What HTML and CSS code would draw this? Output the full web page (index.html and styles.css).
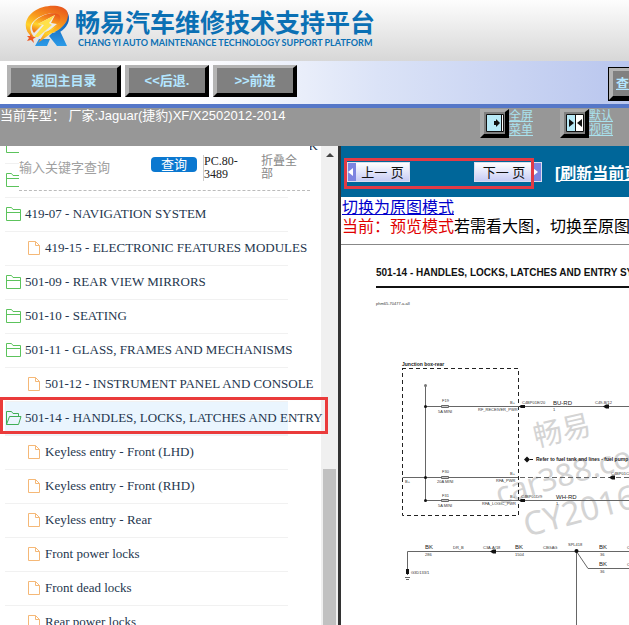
FILE: index.html
```html
<!DOCTYPE html>
<html lang="zh-CN">
<head>
<meta charset="utf-8">
<title>畅易汽车维修技术支持平台</title>
<link rel="stylesheet" href="styles.css">
</head>
<body>
<header class="brand">
  <svg class="brand-logo" viewBox="0 0 48 42" aria-hidden="true">
    <defs>
      <linearGradient id="flame" x1="0.8" y1="0" x2="0.3" y2="1">
        <stop offset="0" stop-color="#e8561c"/><stop offset="0.4" stop-color="#f7941d"/><stop offset="0.7" stop-color="#ffd42b"/><stop offset="1" stop-color="#f07a1c"/>
      </linearGradient>
      <linearGradient id="leg" x1="0" y1="0" x2="0" y2="1">
        <stop offset="0" stop-color="#0b4fa8"/><stop offset="1" stop-color="#2b9be8"/>
      </linearGradient>
    </defs>
    <path fill="url(#leg)" d="M15 34L26 34L23 41L11 41ZM28 28L36 26L43 41L33 41L25 31ZM43 7C48 14 43 24 34 28L30 27C40 22 44 16 43 7Z"/>
    <path fill="url(#flame)" d="M8 32C-1 25 0 14 9 7C20-1 38-1 43 6C47 15 38 25 26 29L14 38L21 27C31 25 37 18 35 12C32 6 19 8 11 15C5 20 5 26 10 32Z"/>
    <path fill="url(#flame)" d="M36 11C33 6 20 8 12 15C7 19 7 24 10 28L14 24L18 20L14 19L31 10L27 18L33 19L22 28C32 24 38 17 36 11Z"/>
    <path fill="#ffe14a" d="M31 10L14 19L20 20L10 32L14 32L28 20L25 18Z"/>
    <path fill="#ee5a24" d="M7 29L8 32L12 32L9 34L10 38L7 35L3 36L5 33L3 31L6 31Z"/>
  </svg>
  <div class="brand-text">
    <h1>畅易汽车维修技术支持平台</h1>
    <p>CHANG YI AUTO MAINTENANCE TECHNOLOGY SUPPORT PLATFORM</p>
  </div>
</header>

<nav class="toolbar">
  <button class="bevel wide">返回主目录</button>
  <button class="bevel">&lt;&lt;后退.</button>
  <button class="bevel">&gt;&gt;前进</button>
  <button class="bevel search-all">查询</button>
</nav>

<div class="status">
  <p class="vehicle">当前车型： 厂家:Jaguar(捷豹)XF/X2502012-2014</p>
  <a class="view" href="#full">
    <span class="view-icon"><svg viewBox="0 0 18 18" aria-hidden="true"><path fill="#b8eaf8" stroke="#111" d="M.5.5H17.5V17.5H.5Z"/><path fill="#fff" d="M15 1H17V17H15Z"/><path fill="#111" d="M15 1H16V17H15ZM8 7H10V5L14 9L10 13V11H8Z"/></svg></span>
    <span class="view-label">全屏<br>菜单</span>
  </a>
  <a class="view" href="#default">
    <span class="view-icon"><svg viewBox="0 0 18 18" aria-hidden="true"><path fill="#fff" stroke="#111" d="M.5.5H17.5V17.5H.5Z"/><path fill="#b8eaf8" d="M1 1H9V17H1Z"/><path fill="#111" d="M9 1H10V17H9ZM3 5L8 9L3 13ZM16 5L11 9L16 13Z"/></svg></span>
    <span class="view-label">默认<br>视图</span>
  </a>
</div>

<svg class="symbols" aria-hidden="true">
  <symbol id="folder" viewBox="0 0 17 16"><path fill="none" stroke="#5cc35c" d="M1.5 14.5V1.5H6.5L8 3.5H15.5V14.5ZM1.5 6.5H15.5"/></symbol>
  <symbol id="folder-open" viewBox="0 0 17 16"><path fill="none" stroke="#3fae55" d="M1.5 14.5V1.5H6.5L8 3.5H13.5V6.5M1.5 14.5L4.5 6.5H16L13.5 14.5Z"/></symbol>
  <symbol id="file" viewBox="0 0 14 16"><path fill="none" stroke="#f5b877" d="M1.5 1.5H8.5L12.5 5.5V14.5H1.5ZM8.5 1.5V5.5H12.5"/></symbol>
</svg>

<main class="panes">
  <section class="tree-pane">
    <form class="finder">
      <input type="text" placeholder="输入关键字查询" aria-label="输入关键字查询">
      <button type="button">查询</button>
      <span class="code">PC.80-<br>3489</span>
      <a class="fold" href="#fold">折叠全<br>部</a>
    </form>
    <ul class="tree">
      <li><svg class="folder"><use href="#folder"/></svg><span class="tail">K</span></li>
      <li><svg class="folder"><use href="#folder"/></svg></li>
      <li><svg class="folder"><use href="#folder"/></svg><span>419-07 - NAVIGATION SYSTEM</span></li>
      <li class="child"><svg class="file"><use href="#file"/></svg><span>419-15 - ELECTRONIC FEATURES MODULES</span></li>
      <li><svg class="folder"><use href="#folder"/></svg><span>501-09 - REAR VIEW MIRRORS</span></li>
      <li><svg class="folder"><use href="#folder"/></svg><span>501-10 - SEATING</span></li>
      <li><svg class="folder"><use href="#folder"/></svg><span>501-11 - GLASS, FRAMES AND MECHANISMS</span></li>
      <li class="child"><svg class="file"><use href="#file"/></svg><span>501-12 - INSTRUMENT PANEL AND CONSOLE</span></li>
      <li class="selected"><svg class="folder"><use href="#folder-open"/></svg><span>501-14 - HANDLES, LOCKS, LATCHES AND ENTRY</span></li>
      <li class="child"><svg class="file"><use href="#file"/></svg><span>Keyless entry - Front (LHD)</span></li>
      <li class="child"><svg class="file"><use href="#file"/></svg><span>Keyless entry - Front (RHD)</span></li>
      <li class="child"><svg class="file"><use href="#file"/></svg><span>Keyless entry - Rear</span></li>
      <li class="child"><svg class="file"><use href="#file"/></svg><span>Front power locks</span></li>
      <li class="child"><svg class="file"><use href="#file"/></svg><span>Front dead locks</span></li>
      <li class="child"><svg class="file"><use href="#file"/></svg><span>Rear power locks</span></li>
    </ul>
  </section>
  <div class="scroll"><span class="scroll-up"></span><span class="scroll-thumb"></span></div>

  <section class="doc-pane">
    <div class="pager">
      <button class="page prev"><i></i><span>上一 页</span></button>
      <button class="page next"><span>下一 页</span><i></i></button>
      <a class="refresh" href="#refresh">[刷新当前页]</a>
    </div>
    <div class="mode">
      <a href="#original">切换为原图模式</a>
      <p><b>当前：预览模式</b>若需看大图，切换至原图模式</p>
    </div>
    <svg class="diagram" viewBox="342 245 600 500">
      <g class="watermark">
        <text transform="translate(536 447) rotate(-13)" font-size="29">畅易</text>
        <text transform="translate(499 505) rotate(-16)" font-size="31">car388.com</text>
        <text transform="translate(527 537) rotate(-15)" font-size="33">CY2016</text>
      </g>
      <text class="heading" x="376" y="276">501-14 - HANDLES, LOCKS, LATCHES AND ENTRY SYSTEMS</text>
      <path class="rule" d="M376 287H900"/>
      <text class="tiny" x="376" y="305">phm65-70477-a-all</text>
      <text class="strong" x="402" y="366">Junction box-rear</text>
      <path class="box" d="M402 368.5H518.5V515.5H402.5V368.5"/>
      <g class="wire">
        <path d="M425.5 386V500.5M425.5 406.5H900M402.5 477.5H518M425.5 500.5H900"/>
        <path stroke-dasharray="5 3" d="M520 477.5H900"/>
        <path d="M407.5 575V551.5H900M576.5 551V745M576.5 551.5L588 568.5H900M405 577.5H410M406 579.5H409"/>
        <path fill="#ccc" d="M441.5 405.5H448.5V407.5H441.5ZM441.5 476.5H448.5V478.5H441.5ZM441.5 499.5H448.5V501.5H441.5Z"/>
      </g>
      <g class="node">
        <circle cx="425.5" cy="385.5" r="1.5" fill="#777"/>
        <circle cx="425.5" cy="406.5" r="1.5"/><circle cx="425.5" cy="477.5" r="1.5"/><circle cx="425.5" cy="500.5" r="1.5"/>
        <circle cx="576.5" cy="551" r="2"/>
        <path d="M519 406.5L521 405H525V408H521ZM519 500.5L521 499H525V502H521ZM603 406.5L606 404.5H609V408.5H606ZM609 477.5L612 475.5H615V479.5H612ZM490 551.5L493 549.5H496V553.5H493ZM406 569H409V574H406ZM524 459.5L527 456.5L530 459.5L527 462.5ZM530 459H533V460H530Z"/>
      </g>
      <g class="tiny">
        <text x="442" y="402">F19</text><text x="438" y="413">5A MINI</text>
        <text x="510" y="404">B+</text><text x="478" y="411">RF_RECEIVER_PWR</text>
        <text x="522" y="404">C4BP01E/20</text><text x="553" y="411">1</text><text x="595" y="404">C49-B/12</text>
        <text x="442" y="473">F30</text><text x="437" y="483">20A MINI</text>
        <text x="405" y="483">B+</text><text x="510" y="475">B+</text><text x="496" y="482">RFA_PWR</text><text x="611" y="475">C4BP01C/4</text>
        <text x="442" y="497">F31</text><text x="438" y="507">5A MINI</text>
        <text x="510" y="498">B+</text><text x="482" y="505">RFA_LOGIC_PWR</text><text x="521" y="498">C4BP01D/9</text><text x="556" y="505">1</text>
        <text x="425" y="556">286</text><text x="453" y="549">DR_B</text><text x="483" y="549">C3A-A/18</text>
        <text x="515" y="556">1504</text><text x="543" y="549">CBGAG</text><text x="568" y="546">SPL418</text>
        <text x="600" y="556">36</text><text x="600" y="573">36</text><text x="411" y="574">G3D133/1</text>
        <text x="627" y="549">C</text><text x="627" y="566">C</text>
      </g>
      <g class="label">
        <text x="553" y="405">BU-RD</text><text x="556" y="499">WH-RD</text>
        <text x="425" y="549">BK</text><text x="515" y="549">BK</text><text x="599" y="549">BK</text><text x="599" y="566">BK</text>
      </g>
      <text class="strong" x="536" y="461">Refer to fuel tank and lines - fuel pump</text>
    </svg>
  </section>
</main>
</body>
</html>
```
FILE: styles.css
```css
*, *::before, *::after { box-sizing: border-box; }
body {
  margin: 0;
  height: 100vh;
  overflow: hidden;
  display: flex;
  flex-direction: column;
  font-family: "Liberation Sans", "Noto Sans CJK SC", sans-serif;
  background: #fff;
}
h1, p, ul { margin: 0; padding: 0; }
button { font: inherit; padding: 0; white-space: nowrap; }
.symbols { display: none; }

.brand {
  flex: none;
  height: 61px;
  padding: 5px 0 0 24px;
  display: flex;
  gap: 3px;
  background: linear-gradient(#fdfdfd, #d7d7d7);
}
.brand-logo { width: 48px; height: 42px; }
.brand-text { color: #0b70b4; white-space: nowrap; }
.brand-text h1 { font: bold 25px/33px "Noto Sans CJK SC", sans-serif; }
.brand-text p { padding-left: 3px; font: bold 9px/10px Lato, "Liberation Sans", sans-serif; }

.toolbar {
  flex: none;
  height: 47px;
  padding: 4px 0 0 7px;
  display: flex;
  align-items: flex-start;
  gap: 4px;
  overflow: hidden;
  background: linear-gradient(90deg, #fff 30%, #dbe3f7 60%, #b9c6ee);
  border-bottom: 4px solid #5577c8;
}
.bevel {
  flex: none;
  width: 84px;
  height: 32px;
  background: #808080;
  border: 4px solid;
  border-color: #b4b4b4 #000 #000 #b4b4b4;
  border-top-width: 3px;
  color: #b4e6ff;
  font-size: 13px;
  font-weight: bold;
  line-height: 20px;
}
.wide { width: 114px; }
.search-all {
  margin: 3px -64px 0 auto;
  outline: 1px solid #000;
  text-align: left;
  padding-left: 3px;
  text-decoration: underline;
}

.status {
  flex: none;
  height: 38px;
  padding: 1px 16px 0 0;
  display: flex;
  align-items: flex-start;
  gap: 27px;
  background: #979797;
}
.vehicle { margin-right: auto; color: #fff; font-size: 13px; line-height: 14px; white-space: nowrap; }
.view { display: flex; color: #a9e2ee; font-size: 12px; line-height: 14px; }
.view-icon {
  width: 29px;
  height: 29px;
  padding: 2px;
  background: #808080;
  border: 4px solid;
  border-color: #aaa #000 #000 #aaa;
  border-top-width: 3px;
}
.view-icon svg { display: block; width: 18px; height: 18px; }

.panes { flex: 1; min-height: 0; display: flex; }
.tree-pane {
  position: relative;
  z-index: 1;
  flex: none;
  width: 321px;
  overflow-x: visible;
  overflow-y: clip;
}
.finder {
  position: absolute;
  top: 0;
  left: 19px;
  width: 291px;
  height: 45px;
  padding-top: 9px;
  display: flex;
  align-items: flex-start;
  background: #fff;
  border-bottom: 1px dashed #bbb;
  font-size: 12px;
  line-height: 13px;
}
.finder input {
  width: 132px;
  height: 22px;
  padding: 0;
  border: 0;
  outline: 0;
  font: 13px "Noto Sans CJK SC", sans-serif;
}
.finder input::placeholder { color: #a0a0a0; }
.finder button {
  width: 46px;
  height: 15px;
  margin-top: 2px;
  border: 0;
  border-radius: 4px;
  background: #0b78d0;
  color: #fff;
  font-size: 13px;
  line-height: 14px;
}
.code {
  width: 52px;
  margin-left: 6px;
  border-left: 1px solid #ccc;
  color: #222;
  font-family: "Liberation Serif", serif;
}
.fold { margin-left: 6px; color: #888; text-decoration: none; }

.tree { width: 283px; margin: -16px 0 0 5px; list-style: none; }
.tree li {
  height: 34px;
  padding-bottom: 1px;
  display: flex;
  align-items: center;
  gap: 3px;
  border-bottom: 1px solid #f1f1f1;
  color: #24364e;
  font: 13px "Liberation Serif", serif;
  white-space: nowrap;
}
.tree .child { padding-left: 22px; gap: 4px; }
.folder { flex: none; width: 17px; height: 16px; }
.file { flex: none; width: 14px; height: 16px; }
.tail { margin: 0 -30px 0 auto; }
.tree .selected { position: relative; background: #eaf5fe; }
.selected::after {
  content: "";
  position: absolute;
  inset: -5px -40px 1px -5px;
  border: 3px solid #ea3b3b;
}

.scroll {
  position: relative;
  flex: none;
  width: 20px;
  background: #f0f0f0;
  border-right: 3px solid #333;
}
.scroll-up {
  position: absolute;
  top: 7px;
  left: 5px;
  border: 4px solid transparent;
  border-top: 0;
  border-bottom-color: #444;
}
.scroll-thumb { position: absolute; inset: 323px 2px 0; background: #c1c1c1; }

.doc-pane { flex: 1; min-width: 0; overflow: hidden; }
.pager {
  position: relative;
  height: 51px;
  padding: 0 0 0 6px;
  display: flex;
  align-items: center;
  background: #006699;
}
.pager::after {
  content: "";
  position: absolute;
  top: 12px;
  left: 3px;
  width: 190px;
  height: 31px;
  border: 3px solid #e23a45;
}
.page {
  flex: none;
  height: 20px;
  display: flex;
  align-items: center;
  border: 1px solid #dde;
  background: linear-gradient(#fff, #c7ccf5);
  color: #111;
  font-size: 13px;
}
.page span { flex: 1; }
.page i { width: 8px; height: 18px; background: #7d84e0; display: flex; align-items: center; }
.page i::after { content: ""; border: 4px solid transparent; border-left: 5px solid #fff; border-right: 0; }
.prev { width: 63px; }
.prev i::after { border-left: 0; border-right: 5px solid #fff; }
.next { width: 68px; margin-left: 64px; }
.refresh { margin-left: 13px; color: #fff; font-size: 16px; font-weight: bold; white-space: nowrap; }

.mode {
  height: 48px;
  padding: 1px 0 0 1px;
  border-bottom: 1px solid #888;
  font-size: 16px;
  line-height: 19px;
  white-space: nowrap;
}
.mode a { color: #00c; }
.mode b { color: #e00000; font-weight: normal; }

.diagram {
  display: block;
  width: 600px;
  height: 500px;
  margin-left: 1px;
  font-family: "Liberation Sans", sans-serif;
}
.heading { font-size: 10px; font-weight: bold; fill: #111; }
.strong { font-size: 5px; font-weight: bold; fill: #222; }
.tiny { font-size: 4px; fill: #333; }
.label { font-size: 6px; fill: #222; }
.rule { stroke: #111; stroke-width: 2; }
.box { fill: none; stroke: #222; stroke-dasharray: 4 3; }
.wire { fill: none; stroke: #666; }
.node { fill: #111; }
.watermark { fill: #d4d4d4; font-family: "Noto Sans", "Noto Sans CJK SC", sans-serif; }
```
